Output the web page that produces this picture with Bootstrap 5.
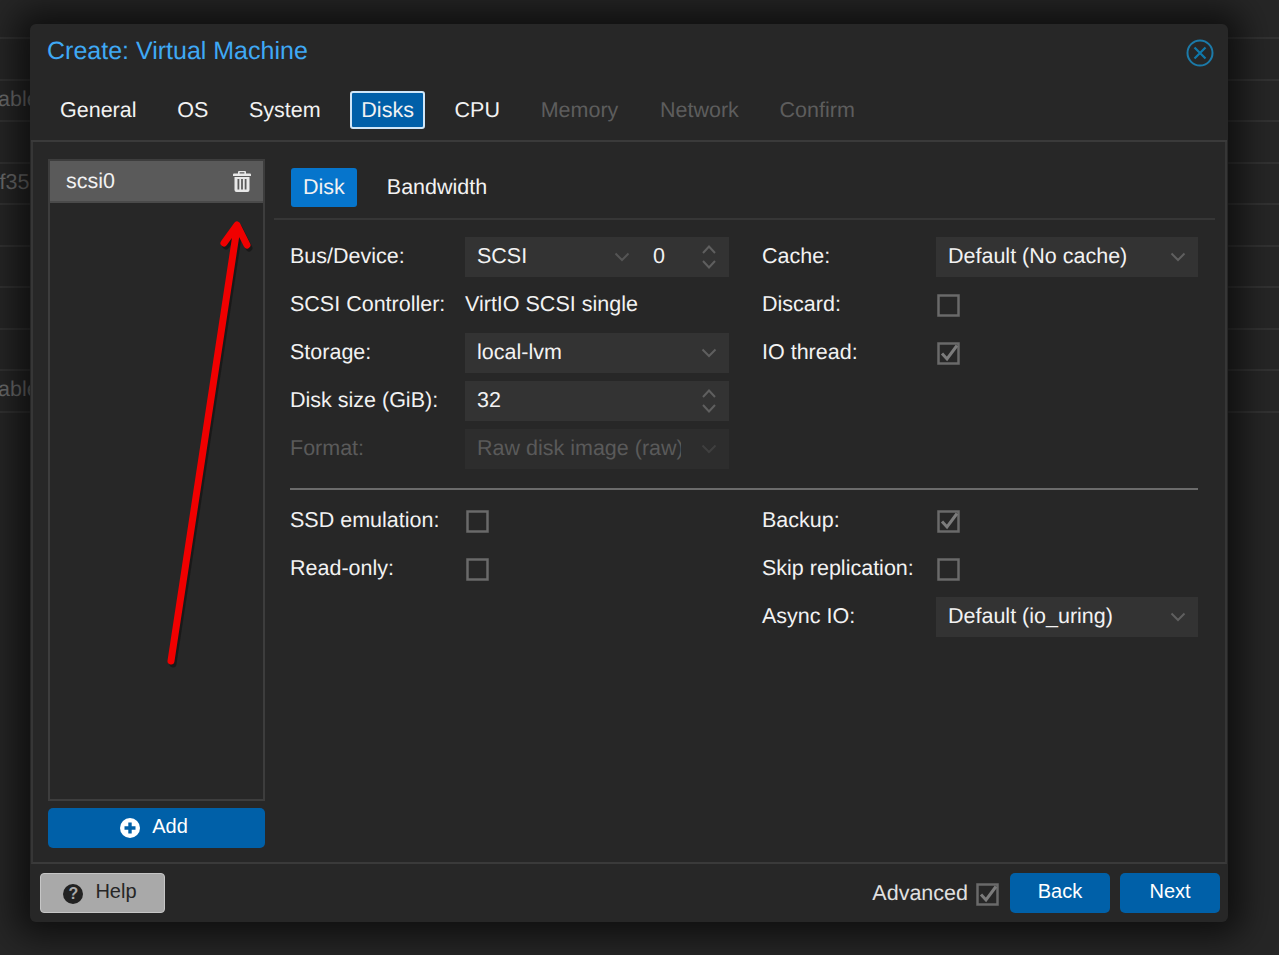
<!DOCTYPE html>
<html lang="en">
<head>
<meta charset="utf-8">
<title>Create: Virtual Machine</title>
<link rel="stylesheet" href="https://cdn.jsdelivr.net/npm/bootstrap@5.3.0/dist/css/bootstrap.min.css">
<style>
html,body{height:100%;margin:0}
body{background:#262626;color:#f2f2f2;font-family:"Liberation Sans",Arial,sans-serif;font-size:21.5px;overflow:hidden;text-rendering:geometricPrecision}
.bgl{padding-top:37px}
.bgr{height:41.5px;border-top:2px solid #323232;color:#6e6e6e;line-height:36px;white-space:nowrap;margin-left:-2px}
.bgr-shift{margin-left:-12.5px}
.win{position:absolute;left:30px;top:24px;width:1198px;height:898px;background:#272727;border-radius:6px;box-shadow:0 0 34px 14px rgba(0,0,0,.62);padding:0 1px 0 1px}
.win-head{height:67px;padding:11px 16px 0}
.win-title{font-size:25px;line-height:33px;color:#3fa9f5}
.xbtn{position:absolute;left:1156px;top:15px;width:28px;height:28px}
.wiz{height:51px;padding:0 0 11px 18px;gap:18.7px;border-bottom:2px solid #3a3a3a}
.wiz-t{height:38px;line-height:34px;padding:0 9px;border:2px solid transparent;border-radius:3px}
.wiz-t.is-on{background:#005fa8;border-color:#cfe6f8}
.wiz-t.is-off{color:#5d5d5d}
.wiz-net{margin-left:1px}
.frame{height:722px;border-left:2px solid #363636;border-right:2px solid #363636;border-bottom:2px solid #3a3a3a}
.side{width:217px;margin:17px 0 0 15px;flex:none}
.disk-box{height:642px;border:2px solid #3d3d3d}
.disk-row{height:42px;background:#5a5a5a;padding:0 12px 0 16px;line-height:37px;border-bottom:2px solid #4a4a4a}
.blue-btn{background:#0060a8;color:#fff;border:0;border-radius:5px;font-size:20px;height:40px}
.btn-tx{margin-bottom:4px}
.add-btn{width:217px;margin-top:7px;gap:12px;padding-right:11px}
.rpane{margin:26px 12px 0 9px}
.tabs2{height:52px;padding-left:17px;gap:18px;border-bottom:2px solid #363636}
.tab2{height:39px;line-height:38px;padding:0 12px;border-radius:3px}
.tab2.is-on{background:#0675cc}
.form-wrap{padding:17px 17px 0 16px}
.fcol{width:439px}
.fcol2{width:436px;margin-left:33px}
.frow{height:40px;margin-bottom:8px}
.flab{width:175px;flex:none;line-height:39px;white-space:nowrap}
.flab2{width:174px}
.fld{flex:1;height:40px;background:#333;padding:0 12px 1px;white-space:nowrap;overflow:hidden}
.fval{line-height:39px;white-space:nowrap}
.dim{color:#5a5a5a}
.fld-dis{background:#2d2d2d}
.chev{flex:none;width:16px;height:10px}
.spin{flex:none;width:16px;height:28px}
.sel-part{width:137px;flex:none}
.num-part{margin-left:23px}
.raw-t{margin-right:20px}
.cb{display:block;flex:none;width:23px;height:23px;margin-top:9px;margin-left:1px}
.rule{height:2px;background:#6b6b6b;margin:11px 0 11px}
.foot{height:57px;padding:9px 7px 0 9px}
.help-btn{width:125px;height:40px;background:#a9a9a9;border:1px solid #c6c6c6;border-radius:4px;color:#262626;font-size:20px;gap:12px;padding:0 5px 0 0}
.help-i{width:20px;height:20px;margin-top:2px;border-radius:50%;background:#222;color:#a9a9a9;font-size:16px;line-height:20px;font-weight:700;text-align:center}
.nav-btn{width:100px;padding:0 0 4px}
.next-b{margin-left:10px}
.adv-lab{line-height:41px;color:#e0e0e0;margin-right:7px}
.adv-cb{margin-top:10px;margin-right:11px}
.arrow{position:absolute;left:150px;top:210px;width:110px;height:470px;pointer-events:none}
</style>
</head>
<body>
<div class="bgl">
  <div class="bgr"></div>
  <div class="bgr">able</div>
  <div class="bgr"></div>
  <div class="bgr bgr-shift">af35</div>
  <div class="bgr"></div>
  <div class="bgr"></div>
  <div class="bgr"></div>
  <div class="bgr"></div>
  <div class="bgr">able</div>
  <div class="bgr"></div>
</div>

<div class="win">
  <div class="win-head"><div class="win-title">Create: Virtual Machine</div></div>
  <svg class="xbtn" viewBox="0 0 28 28" fill="none" stroke="#1c7aa8" stroke-width="2"><circle cx="14" cy="14" r="12.500"/><path d="M8.500 8.500l11 11M19.500 8.500l-11 11" stroke="#0f78ab" stroke-width="2.200"/></svg>
  <div class="wiz d-flex align-items-start">
    <div class="wiz-t">General</div><div class="wiz-t">OS</div><div class="wiz-t">System</div><div class="wiz-t is-on">Disks</div><div class="wiz-t">CPU</div><div class="wiz-t is-off">Memory</div><div class="wiz-t is-off wiz-net">Network</div><div class="wiz-t is-off">Confirm</div>
  </div>
  <div class="frame d-flex">
    <div class="side">
      <div class="disk-box">
        <div class="disk-row d-flex justify-content-between align-items-center">
          <span>scsi0</span>
          <svg width="18" height="21" viewBox="0 0 18 21"><path fill="#e8e8e8" fill-rule="evenodd" d="M6 0h6a1 1 0 0 1 1 1v1.600h4a1 1 0 0 1 1 1V5H0V3.600a1 1 0 0 1 1-1h4V1a1 1 0 0 1 1-1zM6.600 1.300v1.300h4.800V1.300zM1.500 6h15v13a2 2 0 0 1-2 2h-11a2 2 0 0 1-2-2zM4.500 8v10.500h1.800V8zM8.100 8v10.500h1.800V8zM11.700 8v10.500h1.800V8z"/></svg>
        </div>
      </div>
      <button class="blue-btn add-btn d-flex align-items-center justify-content-center">
        <svg width="20" height="20" viewBox="0 0 20 20"><circle cx="10" cy="10" r="10" fill="#fff"/><path d="M10 4.500v11M4.500 10h11" stroke="#0060a8" stroke-width="3.400"/></svg>
        <span class="btn-tx">Add</span>
      </button>
    </div>
    <div class="rpane flex-grow-1">
      <div class="tabs2 d-flex">
        <div class="tab2 is-on">Disk</div><div class="tab2">Bandwidth</div>
      </div>
      <div class="form-wrap">
        <div class="d-flex">
          <div class="fcol">
            <div class="frow d-flex"><div class="flab">Bus/Device:</div>
              <div class="fld d-flex align-items-center">
                <span class="sel-part">SCSI</span>
                <svg class="chev" viewBox="0 0 16 10" fill="none" stroke="#555" stroke-width="2"><path d="M1.500 1.500L8 8l6.500-6.500"/></svg>
                <span class="num-part flex-grow-1">0</span>
                <svg class="spin" viewBox="0 0 16 28" fill="none" stroke="#5f5f5f" stroke-width="2"><path d="M2 10l6-6.500L14 10M2 18l6 6.500L14 18"/></svg>
              </div>
            </div>
            <div class="frow d-flex"><div class="flab">SCSI Controller:</div><div class="fval">VirtIO SCSI single</div></div>
            <div class="frow d-flex"><div class="flab">Storage:</div>
              <div class="fld d-flex align-items-center"><span class="flex-grow-1">local-lvm</span>
                <svg class="chev" viewBox="0 0 16 10" fill="none" stroke="#5f5f5f" stroke-width="2"><path d="M1.500 1.500L8 8l6.500-6.500"/></svg></div>
            </div>
            <div class="frow d-flex"><div class="flab">Disk size (GiB):</div>
              <div class="fld d-flex align-items-center"><span class="flex-grow-1">32</span>
                <svg class="spin" viewBox="0 0 16 28" fill="none" stroke="#5f5f5f" stroke-width="2"><path d="M2 10l6-6.500L14 10M2 18l6 6.500L14 18"/></svg></div>
            </div>
            <div class="frow d-flex"><div class="flab dim">Format:</div>
              <div class="fld fld-dis dim d-flex align-items-center"><span class="raw-t flex-grow-1 overflow-hidden">Raw disk image (raw)</span>
                <svg class="chev" viewBox="0 0 16 10" fill="none" stroke="#3f3f3f" stroke-width="2"><path d="M1.500 1.500L8 8l6.500-6.500"/></svg></div>
            </div>
          </div>
          <div class="fcol2">
            <div class="frow d-flex"><div class="flab flab2">Cache:</div>
              <div class="fld d-flex align-items-center"><span class="flex-grow-1">Default (No cache)</span>
                <svg class="chev" viewBox="0 0 16 10" fill="none" stroke="#5f5f5f" stroke-width="2"><path d="M1.500 1.500L8 8l6.500-6.500"/></svg></div>
            </div>
            <div class="frow d-flex align-items-start"><div class="flab flab2">Discard:</div>
              <svg class="cb" viewBox="0 0 23 23" fill="none"><rect x="1.500" y="1.500" width="20" height="20" stroke="#6a6a6a" stroke-width="2.500"/></svg></div>
            <div class="frow d-flex align-items-start"><div class="flab flab2">IO thread:</div>
              <svg class="cb" viewBox="0 0 23 23" fill="none"><rect x="1.500" y="1.500" width="20" height="20" stroke="#6a6a6a" stroke-width="2.500"/><path d="M5 11.500l5 5.500L20 3.500" stroke="#7c7c7c" stroke-width="3"/></svg></div>
          </div>
        </div>
        <div class="rule"></div>
        <div class="d-flex">
          <div class="fcol">
            <div class="frow d-flex align-items-start"><div class="flab">SSD emulation:</div>
              <svg class="cb" viewBox="0 0 23 23" fill="none"><rect x="1.500" y="1.500" width="20" height="20" stroke="#6a6a6a" stroke-width="2.500"/></svg></div>
            <div class="frow d-flex align-items-start"><div class="flab">Read-only:</div>
              <svg class="cb" viewBox="0 0 23 23" fill="none"><rect x="1.500" y="1.500" width="20" height="20" stroke="#6a6a6a" stroke-width="2.500"/></svg></div>
          </div>
          <div class="fcol2">
            <div class="frow d-flex align-items-start"><div class="flab flab2">Backup:</div>
              <svg class="cb" viewBox="0 0 23 23" fill="none"><rect x="1.500" y="1.500" width="20" height="20" stroke="#6a6a6a" stroke-width="2.500"/><path d="M5 11.500l5 5.500L20 3.500" stroke="#7c7c7c" stroke-width="3"/></svg></div>
            <div class="frow d-flex align-items-start"><div class="flab flab2">Skip replication:</div>
              <svg class="cb" viewBox="0 0 23 23" fill="none"><rect x="1.500" y="1.500" width="20" height="20" stroke="#6a6a6a" stroke-width="2.500"/></svg></div>
            <div class="frow d-flex"><div class="flab flab2">Async IO:</div>
              <div class="fld d-flex align-items-center"><span class="flex-grow-1">Default (io_uring)</span>
                <svg class="chev" viewBox="0 0 16 10" fill="none" stroke="#5f5f5f" stroke-width="2"><path d="M1.500 1.500L8 8l6.500-6.500"/></svg></div>
            </div>
          </div>
        </div>
      </div>
    </div>
  </div>
  <div class="foot d-flex align-items-start">
    <button class="help-btn d-flex align-items-center justify-content-center">
      <span class="help-i">?</span><span class="btn-tx">Help</span>
    </button>
    <div class="ms-auto d-flex align-items-start">
      <span class="adv-lab">Advanced</span>
      <svg class="cb adv-cb" viewBox="0 0 23 23" fill="none"><rect x="1.500" y="1.500" width="20" height="20" stroke="#6a6a6a" stroke-width="2.500"/><path d="M5 11.500l5 5.500L20 3.500" stroke="#7c7c7c" stroke-width="3"/></svg>
      <button class="blue-btn nav-btn">Back</button>
      <button class="blue-btn nav-btn next-b">Next</button>
    </div>
  </div>
</div>

<svg class="arrow" viewBox="150 210 110 470" fill="none">
  <g stroke="#161616" stroke-opacity=".75" stroke-width="7" stroke-linecap="round" stroke-linejoin="round" transform="translate(2 3)">
    <path d="M171 661L237 228M224 243L237 225L247 245"/>
  </g>
  <g stroke="#f00000" stroke-width="7" stroke-linecap="round" stroke-linejoin="round">
    <path d="M171 661L237 228M224 243L237 225L247 245"/>
  </g>
</svg>
<script src="https://cdn.jsdelivr.net/npm/bootstrap@5.3.0/dist/js/bootstrap.bundle.min.js"></script>
</body>
</html>
